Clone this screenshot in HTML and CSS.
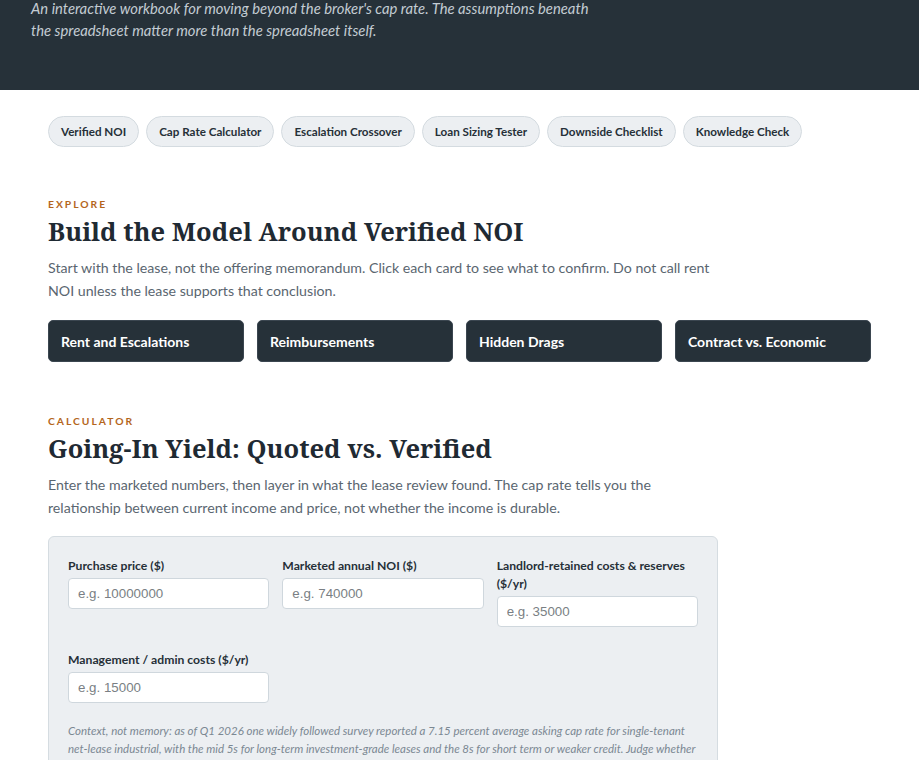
FILE: index.html
```html
<!DOCTYPE html>
<html lang="en">
<head>
<meta charset="utf-8">
<title>Net-Lease Underwriting Workbook</title>
<link rel="stylesheet" href="styles.css">
</head>
<body>
<header class="hero">
  <div class="hero-inner">
    <p class="hero-sub">An interactive workbook for moving beyond the broker's cap rate. The assumptions beneath the spreadsheet matter more than the spreadsheet itself.</p>
  </div>
</header>

<main class="page">
  <nav class="pills">
    <a class="pill" href="#noi">Verified NOI</a>
    <a class="pill" href="#cap">Cap Rate Calculator</a>
    <a class="pill" href="#esc">Escalation Crossover</a>
    <a class="pill" href="#loan">Loan Sizing Tester</a>
    <a class="pill" href="#down">Downside Checklist</a>
    <a class="pill" href="#quiz">Knowledge Check</a>
  </nav>

  <section class="section section-explore" id="noi">
    <div class="eyebrow">Explore</div>
    <h2 class="section-title">Build the Model Around Verified NOI</h2>
    <p class="lede">Start with the lease, not the offering memorandum. Click each card to see what to confirm. Do not call rent NOI unless the lease supports that conclusion.</p>
    <div class="cards">
      <button class="card" type="button">Rent and Escalations</button>
      <button class="card" type="button">Reimbursements</button>
      <button class="card" type="button">Hidden Drags</button>
      <button class="card" type="button">Contract vs. Economic</button>
    </div>
  </section>

  <section class="section section-calc" id="cap">
    <div class="eyebrow">Calculator</div>
    <h2 class="section-title">Going-In Yield: Quoted vs. Verified</h2>
    <p class="lede">Enter the marketed numbers, then layer in what the lease review found. The cap rate tells you the relationship between current income and price, not whether the income is durable.</p>
    <div class="panel">
      <div class="fields">
        <label class="field">
          <span class="field-label">Purchase price ($)</span>
          <input class="field-input" type="text" placeholder="e.g. 10000000">
        </label>
        <label class="field">
          <span class="field-label">Marketed annual NOI ($)</span>
          <input class="field-input" type="text" placeholder="e.g. 740000">
        </label>
        <label class="field">
          <span class="field-label">Landlord-retained costs &amp; reserves ($/yr)</span>
          <input class="field-input" type="text" placeholder="e.g. 35000">
        </label>
        <label class="field">
          <span class="field-label">Management / admin costs ($/yr)</span>
          <input class="field-input" type="text" placeholder="e.g. 15000">
        </label>
      </div>
      <p class="note">Context, not memory: as of Q1 2026 one widely followed survey reported a 7.15 percent average asking cap rate for single-tenant net-lease industrial, with the mid 5s for long-term investment-grade leases and the 8s for short term or weaker credit. Judge whether the marketed yield is consistent with the lease you actually read.</p>
    </div>
  </section>
</main>
</body>
</html>
```
FILE: styles.css
```css
* { box-sizing: border-box; }

html, body {
  margin: 0;
  padding: 0;
  background: #ffffff;
}

body {
  font-family: "Lato", "Open Sans", sans-serif;
  color: #263038;
  overflow: hidden;
}

/* Header band */
.hero {
  background: #263139;
  color: #c9d1d8;
}

.hero-inner {
  max-width: 857px;
  margin: 0 auto;
  padding: 0 0 49px;
}

.hero-sub {
  margin: -3px 0 0;
  max-width: 575px;
  font-style: italic;
  font-size: 14.8px;
  line-height: 22px;
  color: #c3ccd3;
}

/* Page container */
.page {
  max-width: 823px;
  margin: 0 auto;
}

/* Pills nav */
.pills {
  display: flex;
  flex-wrap: wrap;
  gap: 7px;
  margin-top: 26px;
}

.pill {
  display: inline-flex;
  align-items: center;
  height: 31px;
  padding: 0 12px;
  border: 1px solid #d4dbe0;
  border-radius: 16px;
  background: #eceff2;
  color: #263038;
  font-size: 11.65px;
  font-weight: 700;
  text-decoration: none;
  white-space: nowrap;
}

/* Sections */
.section-explore { margin-top: 50px; }
.section-calc { margin-top: 52px; }

.eyebrow {
  font-size: 10.3px;
  line-height: 14px;
  font-weight: 700;
  letter-spacing: 2px;
  text-transform: uppercase;
  color: #b4661c;
}

.section-title {
  margin: 4px 0 0;
  font-family: "Noto Serif", "DejaVu Serif", serif;
  font-size: 25.5px;
  line-height: 32px;
  font-weight: 700;
  color: #1f2a33;
}

.lede {
  margin: 9px 0 0;
  max-width: 668px;
  font-size: 14.2px;
  line-height: 23px;
  color: #5a6670;
}

/* Explore cards */
.cards {
  display: grid;
  grid-template-columns: repeat(4, 1fr);
  gap: 13px;
  margin-top: 18px;
}

.card {
  height: 42px;
  padding: 0 12px;
  border: 1px solid #3b4650;
  border-radius: 5px;
  background: #263139;
  color: #ffffff;
  font-family: "Lato", "Open Sans", sans-serif;
  font-size: 14px;
  font-weight: 700;
  text-align: left;
  cursor: pointer;
}

/* Calculator panel */
.panel {
  max-width: 670px;
  margin-top: 17px;
  padding: 20px 19px;
  border: 1px solid #d5dce1;
  border-radius: 6px;
  background: #eceff2;
}

.fields {
  display: grid;
  grid-template-columns: repeat(3, 1fr);
  column-gap: 13px;
  row-gap: 24px;
  align-items: start;
}

.field {
  display: flex;
  flex-direction: column;
  gap: 3px;
}

.field-label {
  font-size: 12.2px;
  line-height: 18px;
  font-weight: 700;
  color: #263038;
}

.field-input {
  width: 100%;
  height: 31px;
  padding: 0 9px;
  border: 1px solid #cfd7dd;
  border-radius: 4px;
  background: #ffffff;
  font-family: "Liberation Sans", Arial, sans-serif;
  font-size: 13.333px;
  color: #263038;
}

.field-input::placeholder {
  color: #7a7f84;
}

.note {
  margin: 19px -1px 0 0;
  font-size: 11.5px;
  line-height: 18px;
  font-style: italic;
  color: #7b8892;
}
```
